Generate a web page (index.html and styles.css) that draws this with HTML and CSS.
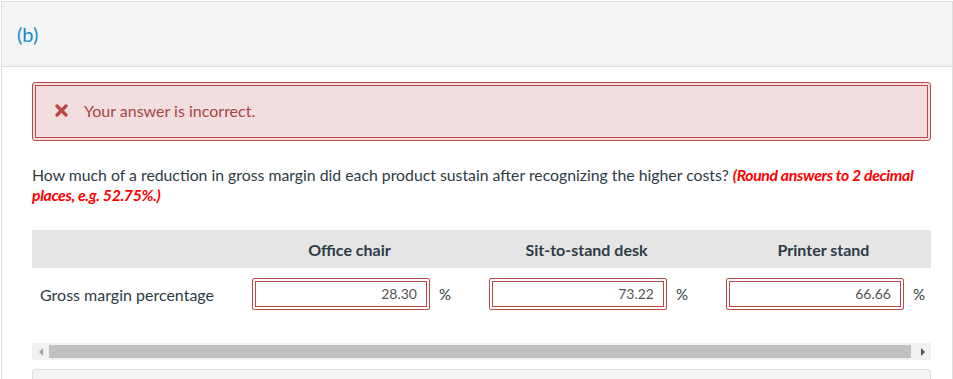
FILE: index.html
```html
<!DOCTYPE html>
<html>
<head>
<meta charset="utf-8">
<link rel="stylesheet" href="styles.css">
</head>
<body>
<div class="panel">
  <div class="part-header"><span class="part-label">(b)</span></div>
  <div class="content">
    <div class="alert">
      <div class="alert-inner">
        <svg class="x-icon" width="13" height="13" viewBox="0 0 13 13"><path d="M2 2 L11 11 M11 2 L2 11" stroke="#b94a48" stroke-width="3.4" stroke-linecap="round"/></svg>
        <span class="alert-text">Your answer is incorrect.</span>
      </div>
    </div>
    <p class="question">How much of a reduction in gross margin did each product sustain after recognizing the higher costs? <em class="hint">(Round answers to 2 decimal places, e.g. 52.75%.)</em></p>
    <div class="table-scroll">
      <div class="table">
        <div class="thead">
          <div class="th label-col"></div>
          <div class="th">Office chair</div>
          <div class="th">Sit-to-stand desk</div>
          <div class="th">Printer stand</div>
        </div>
        <div class="trow">
          <div class="td label-col">Gross margin percentage</div>
          <div class="td cell"><div class="input-wrap"><div class="input">28.30</div></div><span class="pct">%</span></div>
          <div class="td cell"><div class="input-wrap"><div class="input">73.22</div></div><span class="pct">%</span></div>
          <div class="td cell"><div class="input-wrap"><div class="input">66.66</div></div><span class="pct">%</span></div>
        </div>
      </div>
    </div>
    <div class="scrollbar">
      <div class="sb-btn"><span class="arrow-left"></span></div>
      <div class="sb-track"><div class="sb-thumb"></div></div>
      <div class="sb-btn"><span class="arrow-right"></span></div>
    </div>
    <div class="next-box"></div>
  </div>
</div>
</body>
</html>
```
FILE: styles.css
```css
html, body {
  margin: 0;
  padding: 0;
  background: #fff;
}
body {
  font-family: Lato, "Open Sans", Arial, sans-serif;
  color: #333;
  height: 379px;
  overflow: hidden;
}
.panel {
  margin: 1px 0 0 1px;
  border: 1px solid #ddd;
  border-bottom: none;
  height: 378px;
  box-sizing: border-box;
  overflow: hidden;
}
.part-header {
  background: #f4f4f4;
  height: 64px;
  border-bottom: 1px solid #ddd;
  display: flex;
  align-items: center;
  padding-left: 15px;
}
.part-label {
  color: #1a8ac6;
  font-size: 20px;
  line-height: 1;
}
.content {
  padding: 15px 21px 0 30px;
}
.alert {
  border: 1px solid #b94a48;
  border-radius: 3px;
  padding: 2px;
  background: #f2dede;
}
.alert-inner {
  border: 1px solid #b94a48;
  height: 51px;
  display: flex;
  align-items: center;
  padding-left: 19px;
}
.x-icon {
  display: block;
  margin-top: -3px;
}
.alert-text {
  color: #a94442;
  font-size: 16px;
  margin-left: 16px;
  margin-top: -2px;
}
.question {
  margin: 24px 0 0 0;
  font-size: 15.8px;
  line-height: 20px;
  color: #2d3b45;
}
.hint {
  color: #ff0000;
  font-weight: bold;
  font-style: italic;
  letter-spacing: -0.35px;
}
.table-scroll {
  margin-top: 25px;
  overflow: hidden;
}
.table {
  width: 910px;
}
.thead, .trow {
  display: grid;
  grid-template-columns: 199px 237px 237px 237px;
}
.thead {
  background: #e5e5e5;
  height: 38px;
  align-items: center;
}
.th {
  text-align: center;
  font-weight: bold;
  font-size: 16px;
  color: #2d3b45;
}
.trow {
  height: 52px;
  align-items: center;
}
.td.label-col {
  padding-left: 8px;
  font-size: 16px;
  color: #2d3b45;
}
.cell {
  display: flex;
  align-items: center;
  padding-left: 21px;
}
.input-wrap {
  border: 1px solid #b94a48;
  border-radius: 2px;
  padding: 2px;
  width: 172px;
  height: 26px;
}
.input {
  border: 1px solid #b94a48;
  height: 24px;
  line-height: 24px;
  text-align: right;
  padding-right: 9px;
  font-size: 14px;
  color: #555;
}
.pct {
  margin-left: 9px;
  font-size: 15px;
  color: #2d3b45;
}
.scrollbar {
  margin-top: 23px;
  height: 17px;
  background: #f1f1f1;
  display: flex;
}
.sb-btn {
  width: 17px;
  display: flex;
  align-items: center;
  justify-content: center;
}
.arrow-left {
  width: 0;
  height: 0;
  border-top: 4px solid transparent;
  border-bottom: 4px solid transparent;
  border-right: 4px solid #a3a3a3;
}
.arrow-right {
  width: 0;
  height: 0;
  border-top: 4px solid transparent;
  border-bottom: 4px solid transparent;
  border-left: 4px solid #505050;
}
.sb-track {
  flex: 1;
  padding: 2px 0;
}
.sb-thumb {
  background: #c1c1c1;
  height: 13px;
  margin-right: 3px;
}
.next-box {
  margin-top: 9px;
  border: 1px solid #ddd;
  border-radius: 3px;
  background: #f4f4f4;
  height: 40px;
}
```
